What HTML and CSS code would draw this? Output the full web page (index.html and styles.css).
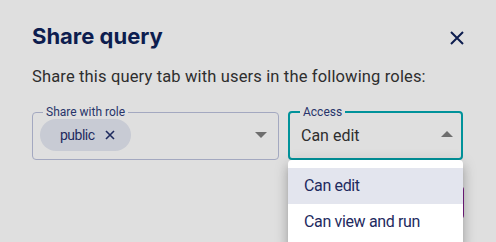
FILE: index.html
```html
<html>
  <head>
    <link rel="stylesheet" href="styles.css">
  </head>
  <body class="body">
    <div class="Dialog">
      <div class="Dialog-header">
        <h1 class="Dialog-title">Share query</h1>
        <button class="Dialog-close" aria-label="Close">
          <svg width="14" height="14" viewBox="0 0 14 14"><path d="M1 1L13 13M13 1L1 13" stroke="#0d1d4f" stroke-width="2" fill="none"/></svg>
        </button>
      </div>
      <p class="Dialog-text">Share this query tab with users in the following roles:</p>

      <div class="Fields">
        <fieldset class="Field Field--role">
          <legend class="Field-label">Share with role</legend>
          <div class="Field-body">
            <span class="Chip">public
              <svg class="Chip-x" width="10" height="10" viewBox="0 0 10 10"><path d="M1 1L9 9M9 1L1 9" stroke="#1e2a5e" stroke-width="1.6" fill="none"/></svg>
            </span>
            <span class="Caret Caret--down"></span>
          </div>
        </fieldset>

        <div class="Select">
          <fieldset class="Field Field--access">
            <legend class="Field-label">Access</legend>
            <div class="Field-body">
              <span class="Field-value">Can edit</span>
              <span class="Caret Caret--up"></span>
            </div>
          </fieldset>
          <ul class="Menu">
            <li class="Menu-item Menu-item--active">Can edit</li>
            <li class="Menu-item">Can view and run</li>
          </ul>
        </div>
      </div>

      <div class="Actions">
        <button class="Actions-btn">Share</button>
      </div>
    </div>
  </body>
</html>
```

FILE: styles.css
```css
html, body {
  padding: 0;
  margin: 0;
  font-family: Roboto, "Liberation Sans", sans-serif;
}
body {
  background-color: #dfdfdf;
  width: 496px;
  height: 242px;
  overflow: hidden;
}

.Dialog {
  padding: 22px 32px 0 32px;
}
.Dialog-header {
  display: flex;
  align-items: center;
  justify-content: space-between;
  height: 28px;
}
.Dialog-title {
  margin: 0;
  font-family: Inter, sans-serif;
  font-size: 22px;
  font-weight: 700;
  color: #0d1d4f;
}
.Dialog-close {
  border: none;
  background: none;
  padding: 0;
  margin-top: 4px;
  width: 14px;
  height: 14px;
  display: flex;
}
.Dialog-text {
  margin: 15px 0 0 0;
  font-size: 16.5px;
  letter-spacing: 0.15px;
  color: #2e2e2e;
  line-height: 24px;
}

.Fields {
  display: flex;
  gap: 9px;
  margin-top: 17px;
}
.Field {
  margin: 0;
  padding: 0 7px 0 7px;
  border: 1px solid #a3a8c0;
  border-radius: 4px;
  height: 54px;
  box-sizing: border-box;
}
.Field--role {
  width: 247px;
}
.Field--access {
  width: 175px;
  border: 2px solid #00929a;
  padding: 0 6px;
}
.Field-label {
  padding: 0 3px;
  margin-left: 3px;
  font-size: 12px;
  line-height: 12px;
  color: #28346a;
}
.Field--access .Field-label {
  margin-left: 4px;
}
.Field-body {
  display: flex;
  align-items: center;
  justify-content: space-between;
  height: 34px;
}
.Chip {
  display: inline-flex;
  align-items: center;
  gap: 10px;
  height: 32px;
  padding: 0 16px 0 20px;
  border-radius: 16px;
  background-color: #c8cbd4;
  color: #1e2a5e;
  font-size: 14px;
  letter-spacing: -0.5px;
}
.Field-value {
  font-size: 16px;
  color: #2e2e2e;
  margin-left: 5px;
}
.Caret {
  width: 0;
  height: 0;
  border-left: 6px solid transparent;
  border-right: 6px solid transparent;
  margin-right: 5px;
}
.Caret--down {
  border-top: 6px solid #6e6e6e;
  margin-right: 4px;
}
.Caret--up {
  border-bottom: 6px solid #6e6e6e;
  margin-right: 2px;
  margin-top: -2px;
}

.Select {
  position: relative;
}
.Menu {
  position: absolute;
  top: 100%;
  left: 0;
  width: 175px;
  margin: 0;
  padding: 8px 0;
  list-style: none;
  background-color: #fff;
  border-radius: 4px;
  box-shadow: 0 5px 5px -3px rgba(0,0,0,0.2), 0 8px 10px 1px rgba(0,0,0,0.14), 0 3px 14px 2px rgba(0,0,0,0.12);
  z-index: 2;
}
.Menu-item {
  height: 36px;
  line-height: 36px;
  padding-left: 16px;
  font-size: 16px;
  letter-spacing: -0.35px;
  color: #1e2a5e;
}
.Menu-item--active {
  background-color: #e3e5ee;
}

.Actions {
  display: flex;
  justify-content: flex-end;
  margin-top: 26px;
}
.Actions-btn {
  height: 33px;
  padding: 0 20px;
  border: none;
  border-radius: 4px;
  background-color: #7a1f86;
  color: #fff;
  font-size: 14px;
}
```
